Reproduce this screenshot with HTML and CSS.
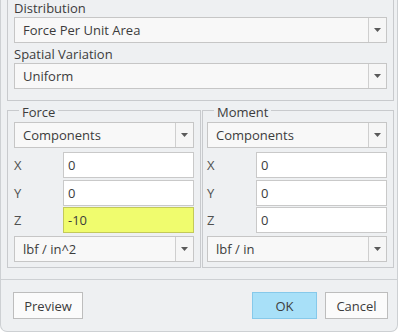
FILE: index.html
```html
<!DOCTYPE html>
<html>
<head>
<meta charset="utf-8">
<link rel="stylesheet" href="styles.css">
</head>
<body>
<div class="window">
  <div class="panel">
    <div class="label">Distribution</div>
    <div class="select"><span class="select-text">Force Per Unit Area</span><span class="select-btn"><svg width="7" height="4" viewBox="0 0 7 4"><path d="M0 0H7L3.5 4Z" fill="#5a5a5a"/></svg></span></div>
    <div class="label label-gap">Spatial Variation</div>
    <div class="select"><span class="select-text">Uniform</span><span class="select-btn"><svg width="7" height="4" viewBox="0 0 7 4"><path d="M0 0H7L3.5 4Z" fill="#5a5a5a"/></svg></span></div>
  </div>
  <div class="groups">
    <fieldset class="group">
      <legend>Force</legend>
      <div class="select"><span class="select-text">Components</span><span class="select-btn"><svg width="7" height="4" viewBox="0 0 7 4"><path d="M0 0H7L3.5 4Z" fill="#5a5a5a"/></svg></span></div>
      <div class="field field-x"><span class="field-label">X</span><span class="input">0</span></div>
      <div class="field field-y"><span class="field-label">Y</span><span class="input">0</span></div>
      <div class="field field-z"><span class="field-label">Z</span><span class="input input-hl">-10</span></div>
      <div class="select select-units"><span class="select-text">lbf / in^2</span><span class="select-btn"><svg width="7" height="4" viewBox="0 0 7 4"><path d="M0 0H7L3.5 4Z" fill="#5a5a5a"/></svg></span></div>
    </fieldset>
    <fieldset class="group group-moment">
      <legend>Moment</legend>
      <div class="select"><span class="select-text">Components</span><span class="select-btn"><svg width="7" height="4" viewBox="0 0 7 4"><path d="M0 0H7L3.5 4Z" fill="#5a5a5a"/></svg></span></div>
      <div class="field field-x"><span class="field-label">X</span><span class="input">0</span></div>
      <div class="field field-y"><span class="field-label">Y</span><span class="input">0</span></div>
      <div class="field field-z"><span class="field-label">Z</span><span class="input">0</span></div>
      <div class="select select-units"><span class="select-text">lbf / in</span><span class="select-btn"><svg width="7" height="4" viewBox="0 0 7 4"><path d="M0 0H7L3.5 4Z" fill="#5a5a5a"/></svg></span></div>
    </fieldset>
  </div>
  <div class="footer">
    <button class="btn btn-preview">Preview</button>
    <button class="btn btn-ok">OK</button>
    <button class="btn btn-cancel">Cancel</button>
  </div>
</div>
</body>
</html>
```
FILE: styles.css
```css
html, body {
  margin: 0;
  padding: 0;
  background: #ffffff;
}
body {
  font-family: "Open Sans", "Noto Sans", sans-serif;
  font-size: 13px;
  color: #3c3c3c;
}
.window {
  width: 398px;
  height: 332px;
  box-sizing: border-box;
  background: #eef0f2;
  border: 1px solid #cdd0d3;
  border-top: 0;
  border-radius: 0 0 7px 7px;
}
.panel {
  margin: 0 3px 0 6px;
  border: 1px solid #c8cacd;
  border-top: 0;
  padding: 0 6px 11px;
}
.label {
  line-height: 17px;
  height: 17px;
}
.label-gap {
  margin-top: 3px;
}
.select {
  display: flex;
  height: 26px;
  box-sizing: border-box;
  border: 1px solid #c6c6c6;
  background: #f8f8f8;
}
.select-text {
  flex: 1;
  padding-left: 8px;
  line-height: 24px;
  white-space: nowrap;
}
.select-btn {
  width: 17px;
  border-left: 1px solid #cfcfcf;
  display: flex;
  align-items: center;
  justify-content: center;
  background: #f6f6f6;
}
.groups {
  display: flex;
  gap: 1px;
  margin: 0 3px 0 6px;
}
.group {
  margin: 0;
  min-width: 0;
  box-sizing: border-box;
  width: 194px;
  border: 1px solid #c8cacd;
  padding: 2px 6px 5px 6px;
}
.group legend {
  padding: 3px 3px 0;
  margin-left: 5px;
  line-height: 16px;
}
.group-moment {
  width: 192px;
  padding-left: 4px;
}
.group-moment legend {
  margin-left: 7px;
}
.field {
  display: flex;
  align-items: center;
  height: 26px;
}
.field-x { margin-top: 4px; }
.field-y { margin-top: 2px; }
.field-z { margin-top: 1px; }
.select-units { margin-top: 3px; }
.field-label {
  width: 49px;
  color: #505050;
}
.input {
  flex: 1;
  height: 26px;
  box-sizing: border-box;
  border: 1px solid #c9c9c9;
  background: #ffffff;
  padding-left: 4px;
  line-height: 24px;
}
.input-hl {
  background: #f0fc6e;
  border-color: #c3c95a;
}
.footer {
  margin-top: 11px;
  border-top: 1px solid #cdd0d3;
  padding: 12px 9px 0 12px;
  display: flex;
  gap: 8px;
}
.btn {
  height: 27px;
  box-sizing: border-box;
  border: 1px solid #bdbdbd;
  background: #fbfbfb;
  font: inherit;
  color: #3c3c3c;
  padding: 0;
}
.btn-preview {
  width: 70px;
  margin-right: auto;
}
.btn-ok {
  width: 65px;
  background: #a8e0f8;
  border-color: #86c9ea;
}
.btn-cancel {
  width: 63px;
}
```
